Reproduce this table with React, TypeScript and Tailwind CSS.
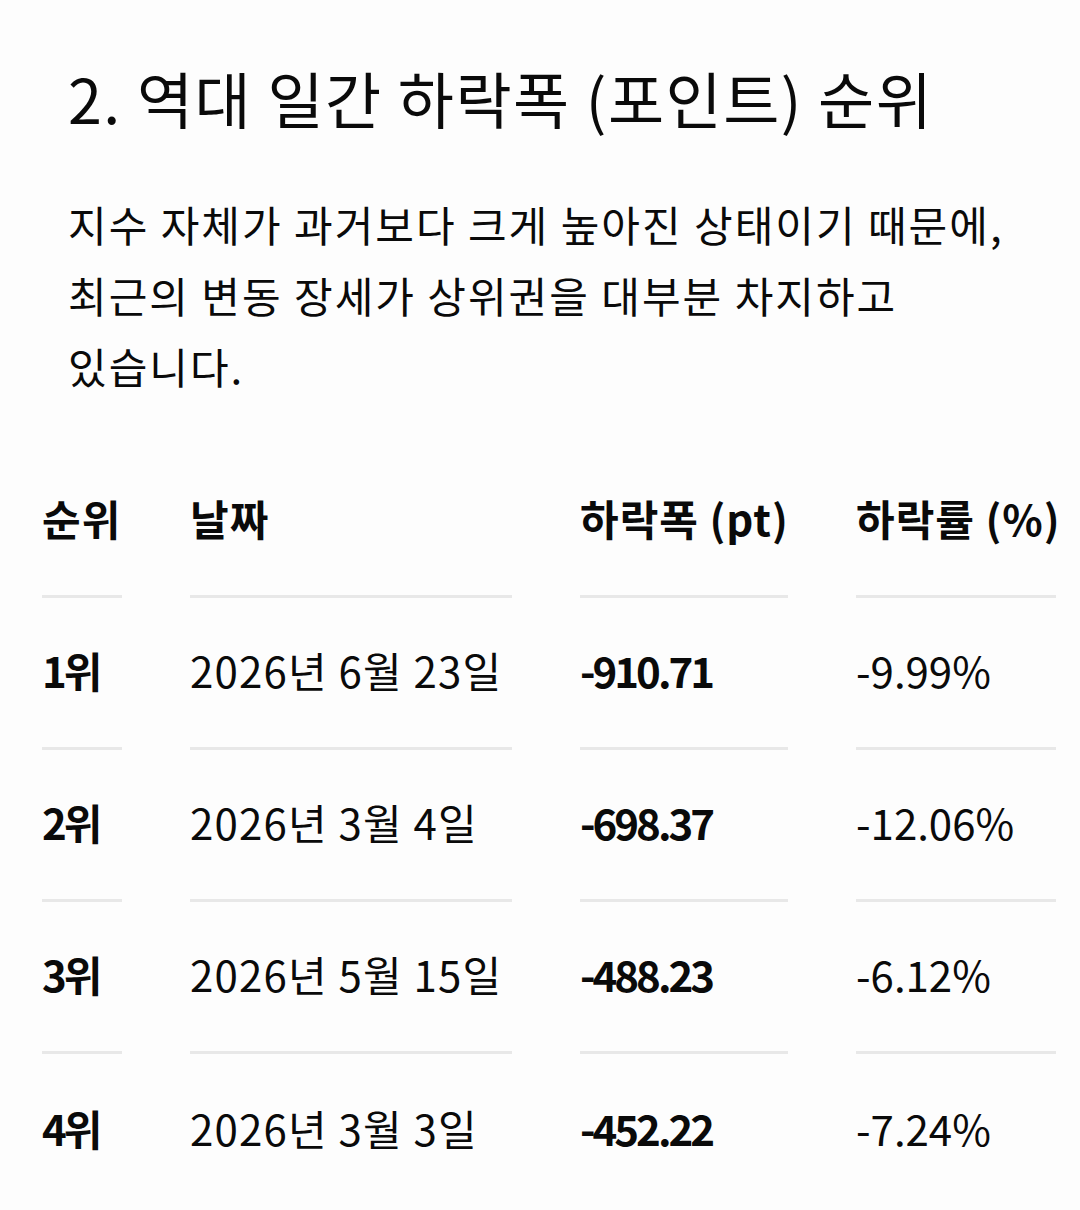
const rows = [
  { rank: '1위', date: '2026년 6월 23일', pt: '-910.71', pct: '-9.99%' },
  { rank: '2위', date: '2026년 3월 4일', pt: '-698.37', pct: '-12.06%' },
  { rank: '3위', date: '2026년 5월 15일', pt: '-488.23', pct: '-6.12%' },
  { rank: '4위', date: '2026년 3월 3일', pt: '-452.22', pct: '-7.24%' },
];

const cell = 'flex items-center h-[152px] pb-[6px] border-b-[3px] border-[#e8e8e8]';

const App = () => {
  return (
    <div
      className="min-h-[1210px] w-[1080px] bg-[#fdfdfd] text-[#0a0a0a] overflow-hidden"
      style={{ fontFamily: '"Noto Sans CJK KR", "Noto Sans", sans-serif' }}
    >
      <div className="pl-[68px] pt-[58px]">
        <h2 className="text-[61px] leading-[80px] font-normal tracking-[1.5px] whitespace-nowrap">
          2. 역대 일간 하락폭 (포인트) 순위
        </h2>
        <p className="mt-[50px] text-[42px] leading-[71px] tracking-[2px] whitespace-nowrap">
          지수 자체가 과거보다 크게 높아진 상태이기 때문에,
          <br />
          최근의 변동 장세가 상위권을 대부분 차지하고
          <br />
          있습니다.
        </p>
      </div>

      <div className="mt-[45px] ml-[42px] grid grid-cols-[80px_322px_208px_200px] gap-x-[68px] text-[42px]">
        <div className={`${cell} font-bold tracking-[1px]`}>순위</div>
        <div className={`${cell} font-bold tracking-[1px]`}>날짜</div>
        <div className={`${cell} font-bold tracking-[1px] whitespace-nowrap`}>하락폭 (pt)</div>
        <div className={`${cell} font-bold tracking-[1px] whitespace-nowrap`}>하락률 (%)</div>
        {rows.map((r, i) => {
          const last = i === rows.length - 1;
          const c = last ? 'flex items-center h-[152px] pb-[6px]' : cell;
          return [
            <div key={`a${i}`} className={`${c} font-bold tracking-[-3px]`}>{r.rank}</div>,
            <div key={`b${i}`} className={`${c} tracking-[1.2px] whitespace-nowrap`}>{r.date}</div>,
            <div key={`c${i}`} className={`${c} font-bold tracking-[-3px]`}>{r.pt}</div>,
            <div key={`d${i}`} className={`${c} whitespace-nowrap`}>{r.pct}</div>,
          ];
        })}
      </div>
    </div>
  );
};

export default App;
